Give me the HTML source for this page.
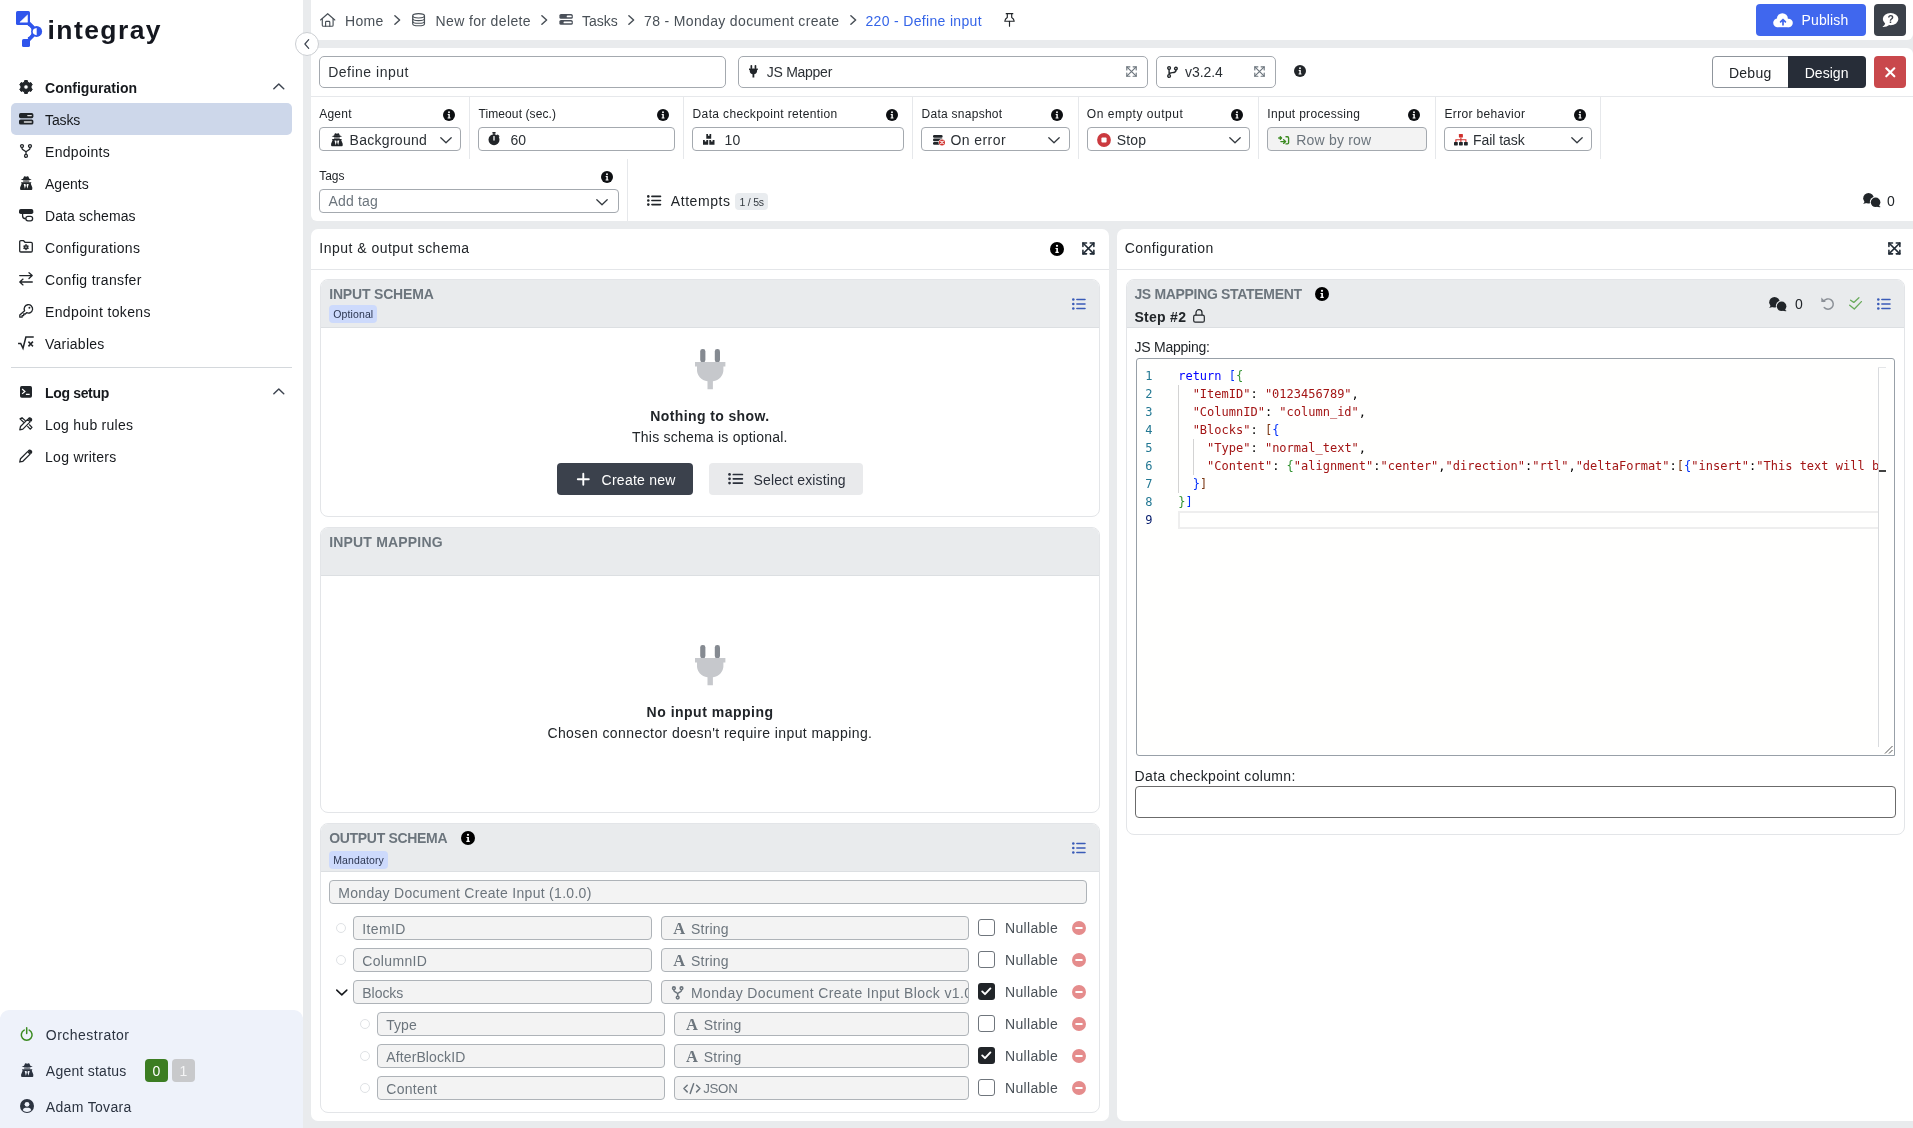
<!DOCTYPE html>
<html lang="en"><head><meta charset="utf-8"><title>Integray - 220 - Define input</title>
<style>
html,body{margin:0;padding:0}
body{width:1913px;height:1128px;overflow:hidden;position:relative;background:#e9ebed;will-change:transform;
 font-family:"Liberation Sans",sans-serif;font-size:14px;color:#212529}
body div,body span.t,body svg{position:absolute;box-sizing:border-box}
.t{white-space:pre;line-height:20px}
svg{overflow:visible;display:block}
.mono{font-family:"DejaVu Sans Mono","Liberation Mono",monospace}
aside,header,section,nav{display:contents}

</style></head>
<body>
<aside aria-label="Sidebar navigation">
<div style="left:0px;top:0px;width:303px;height:1128px;background:#fff;"></div>
<svg style="left:0px;top:0px;" width="60" height="52" viewBox="0 0 60 52"><g fill="#2f55ec"><rect x="16" y="10.9" width="14" height="14.1" rx="1.6"/><rect x="22" y="39" width="8" height="8" rx="1.6"/><circle cx="36.6" cy="31.4" r="5.5"/><path d="M27.2,23.8L30,21.8L35,27L32.2,29.8Z M32.2,33L35,35.8L29.9,41.2L27.2,39.4Z"/></g><path d="M28.2,24.2A7.6,7.6 0 0 1 28.2,38.8" fill="none" stroke="#2f55ec" stroke-width="3.3"/><path d="M19.9,22.2L27.5,14.9V22.2Z" fill="#fff" stroke="#fff" stroke-width="0.5" stroke-linejoin="round"/><path d="M36.7,27.9V35.3Q32.7,34.9 32.7,31.6Q32.7,28.3 36.7,27.9Z" fill="#fff"/></svg>
<span class="t" style="top:13.6px;font-size:26.5px;left:47.6px;font-weight:700;color:#14171f;letter-spacing:1.415px;line-height:32px;">integray</span>
<svg style="left:18.7px;top:80px;" width="14" height="14" viewBox="0 0 14 14"><path d="M5.27,2.20 L5.63,0.54 L8.37,0.54 L8.73,2.20 L10.29,3.10 L11.90,2.58 L13.28,4.96 L12.02,6.10 L12.02,7.90 L13.28,9.04 L11.90,11.42 L10.29,10.90 L8.73,11.80 L8.37,13.46 L5.63,13.46 L5.27,11.80 L3.71,10.90 L2.10,11.42 L0.72,9.04 L1.98,7.90 L1.98,6.10 L0.72,4.96 L2.10,2.58 L3.71,3.10Z M9.30,7.00 a2.3,2.3 0 1,0 -4.6,0 a2.3,2.3 0 1,0 4.6,0Z" fill="#212529" fill-rule="evenodd" stroke="#212529" stroke-width="1" stroke-linejoin="round"/></svg>
<span class="t" style="top:77.6px;font-size:14px;left:45px;font-weight:700;color:#16191d;letter-spacing:0.02px;">Configuration</span>
<svg style="left:272.7px;top:82.7px;" width="11.6" height="6.6" viewBox="0 0 11 6.2"><path d="M0.8,5.4L5.5,0.9L10.2,5.4" fill="none" stroke="#3d4450" stroke-width="1.4" stroke-linecap="round" stroke-linejoin="round"/></svg>
<div style="left:11px;top:103px;width:281px;height:32px;background:#cdd7ea;border-radius:5px;"></div>
<svg style="left:18.6px;top:113.1px;" width="14.4" height="11.6" viewBox="0 0 14.4 11.6"><rect x="0" y="0" width="14.4" height="5.2" rx="1.7" fill="#212529"/><rect x="0" y="6.4" width="14.4" height="5.2" rx="1.7" fill="#212529"/><path d="M8.8,2.6H12.3M5.4,9H12.3" stroke="#fff" stroke-width="1.3" stroke-linecap="round" opacity="0.85"/></svg>
<span class="t" style="top:109.6px;font-size:14px;left:45px;color:#16191d;letter-spacing:-0.124px;">Tasks</span>
<svg style="left:20px;top:143.7px;" width="12" height="14" viewBox="0 0 12 14"><g fill="none" stroke="#212529" stroke-width="1.3"><circle cx="2" cy="2.1" r="1.45"/><circle cx="10" cy="2.1" r="1.45"/><circle cx="6" cy="11.9" r="1.45"/><path d="M2,3.6V4.6C2,6.4 6,6.3 6,8.2V10.4M10,3.6V4.6C10,6.4 6,6.3 6,8.2"/></g></svg>
<span class="t" style="top:141.6px;font-size:14px;left:45px;color:#16191d;letter-spacing:0.315px;">Endpoints</span>
<svg style="left:19.7px;top:175.8px;" width="12.4" height="14" viewBox="0 0 12.4 14"><path d="M3,3L3.9,0.7Q4.1,0 4.8,0.2L6.2,0.7L7.6,0.2Q8.3,0 8.5,0.7L9.4,3Z" fill="#212529"/><path d="M0.7,3.5Q3,2.4 6.2,2.4Q9.4,2.4 11.7,3.5Q9.6,4.6 6.2,4.6Q2.8,4.6 0.7,3.5Z" fill="#212529"/><path d="M3,4.6H9.4L9.1,6.4H3.3Z" fill="#212529" opacity="0.6"/><path d="M1,6.3H11.4L10.8,7.7L12.3,11.4V13Q12.3,13.9 11.4,13.9H1Q0.1,13.9 0.1,13V11.4L1.6,7.7Z" fill="#212529"/><path d="M3.7,8L5.5,8L5.9,9.3L4.9,12.8Z M8.7,8L6.9,8L6.5,9.3L7.5,12.8Z" fill="#fff"/></svg>
<span class="t" style="top:173.6px;font-size:14px;left:45px;color:#16191d;letter-spacing:0.021px;">Agents</span>
<svg style="left:18.6px;top:208.7px;" width="14.3" height="12.6" viewBox="0 0 14.3 12.6"><rect x="0" y="0" width="14.3" height="5" rx="1.8" fill="#212529"/><g fill="none" stroke="#212529" stroke-width="1.3"><path d="M3.6,4.6V7Q3.6,9.7 6.8,9.7"/><rect x="6.9" y="7.3" width="6.7" height="4.6" rx="2.1"/></g></svg>
<span class="t" style="top:205.6px;font-size:14px;left:45px;color:#16191d;letter-spacing:0.101px;">Data schemas</span>
<svg style="left:18.8px;top:240.2px;" width="14" height="12.7" viewBox="0 0 14 12.7"><path d="M0.7,1.9Q0.7,0.7 1.9,0.7H4.6L6,2.3H12.1Q13.3,2.3 13.3,3.5V10.8Q13.3,12 12.1,12H1.9Q0.7,12 0.7,10.8Z" fill="none" stroke="#212529" stroke-width="1.3" stroke-linejoin="round"/><path d="M6.36,5.41 L6.44,4.56 L7.56,4.56 L7.64,5.41 L8.23,5.75 L9.01,5.39 L9.57,6.37 L8.87,6.86 L8.87,7.54 L9.57,8.03 L9.01,9.01 L8.23,8.65 L7.64,8.99 L7.56,9.84 L6.44,9.84 L6.36,8.99 L5.77,8.65 L4.99,9.01 L4.43,8.03 L5.13,7.54 L5.13,6.86 L4.43,6.37 L4.99,5.39 L5.77,5.75Z M7.90,7.20 a0.9,0.9 0 1,0 -1.8,0 a0.9,0.9 0 1,0 1.8,0Z" fill="#212529" fill-rule="evenodd" stroke="#212529" stroke-width="0.5" stroke-linejoin="round"/></svg>
<span class="t" style="top:237.6px;font-size:14px;left:45px;color:#16191d;letter-spacing:0.363px;">Configurations</span>
<svg style="left:18.8px;top:272.2px;" width="14" height="13.6" viewBox="0 0 14 13.6"><g fill="none" stroke="#212529" stroke-width="1.3" stroke-linecap="round" stroke-linejoin="round"><path d="M0.7,3.6H13.1M10,0.7L13.2,3.6L10,6.5"/><path d="M13.3,10H0.9M4,7.1L0.8,10L4,12.9"/></g></svg>
<span class="t" style="top:269.6px;font-size:14px;left:45px;color:#16191d;letter-spacing:0.327px;">Config transfer</span>
<svg style="left:18.8px;top:303.8px;" width="14" height="14" viewBox="0 0 14 14"><g fill="none" stroke="#212529" stroke-width="1.3" stroke-linejoin="round"><path d="M5.6,6.7A4.2,4.2 0 1 1 7.6,8.7L6.3,10H4.7V11.6H3.1V13.2H0.8V10.9Z"/></g><circle cx="10.4" cy="3.8" r="0.95" fill="#212529"/></svg>
<span class="t" style="top:301.6px;font-size:14px;left:45px;color:#16191d;letter-spacing:0.364px;">Endpoint tokens</span>
<svg style="left:18.2px;top:335.7px;" width="15.8" height="13.7" viewBox="0 0 15.8 13.7"><g fill="none" stroke="#212529" stroke-linecap="square"><path d="M0.8,7.5H2.7L5,12.3L7.9,1H15" stroke-width="1.5" stroke-linejoin="miter"/><path d="M11,6.2L14.4,9.8M14.4,6.2L11,9.8" stroke-width="1.6"/></g></svg>
<span class="t" style="top:333.6px;font-size:14px;left:45px;color:#16191d;letter-spacing:0.246px;">Variables</span>
<div style="left:11px;top:367px;width:281px;height:1px;background:#d4d8dc;"></div>
<svg style="left:20px;top:386px;" width="12" height="11.7" viewBox="0 0 12 11.7"><rect x="0" y="0" width="12" height="11.7" rx="1.7" fill="#212529"/><path d="M2.1,3.1L4.9,5.5L2.1,7.9M5.9,8.4H9.7" fill="none" stroke="#fff" stroke-width="1.25"/></svg>
<span class="t" style="top:382.6px;font-size:14px;left:45px;font-weight:700;color:#16191d;letter-spacing:-0.336px;">Log setup</span>
<svg style="left:272.7px;top:387.7px;" width="11.6" height="6.6" viewBox="0 0 11 6.2"><path d="M0.8,5.4L5.5,0.9L10.2,5.4" fill="none" stroke="#3d4450" stroke-width="1.4" stroke-linecap="round" stroke-linejoin="round"/></svg>
<svg style="left:19px;top:417.2px;" width="13.5" height="13.4" viewBox="0 0 13.5 13.4"><g stroke="#212529" stroke-width="1.25" stroke-linejoin="round"><path d="M8.6,2.4L11.1,4.9L3.9,12.1L0.8,12.8L1.5,9.5Z" fill="none"/><path d="M9.4,1.6Q10.6,0.2 12,1.5Q13.3,2.8 11.9,4.1Z" fill="#212529"/><path d="M4.9,5.5L1,1.9L3,0.7L6.6,3.9M8.4,9.2L11.2,12.2L13,10.4L10.2,7.5" fill="none"/></g></svg>
<span class="t" style="top:414.6px;font-size:14px;left:45px;color:#16191d;letter-spacing:0.263px;">Log hub rules</span>
<svg style="left:19px;top:449.1px;" width="13.5" height="13.7" viewBox="0 0 13.5 13.7"><g stroke="#212529" stroke-width="1.3" stroke-linejoin="round"><path d="M8.6,2.6L11.1,5.1L3.9,12.3L0.8,13L1.5,9.7Z" fill="none"/><path d="M9.4,1.8Q10.6,0.4 12,1.7Q13.3,3 11.9,4.3Z" fill="#212529"/></g></svg>
<span class="t" style="top:446.6px;font-size:14px;left:45px;color:#16191d;letter-spacing:0.283px;">Log writers</span>
<div style="left:0px;top:1010px;width:303px;height:118px;background:#eef2fa;border-radius:9px 9px 0 0;"></div>
<svg style="left:20.1px;top:1026.8px;" width="13.4" height="13.6" viewBox="0 0 13.4 13.6"><g fill="none" stroke="#3a8a1f" stroke-width="1.5" stroke-linecap="round"><path d="M4.2,3.1A5.4,5.4 0 1 0 9.2,3.1"/><path d="M6.7,0.8V6.4"/></g></svg>
<span class="t" style="top:1024.9px;font-size:14px;left:45.8px;color:#2b3340;letter-spacing:0.49px;">Orchestrator</span>
<svg style="left:20.6px;top:1062.7px;" width="12.4" height="14" viewBox="0 0 12.4 14"><path d="M3,3L3.9,0.7Q4.1,0 4.8,0.2L6.2,0.7L7.6,0.2Q8.3,0 8.5,0.7L9.4,3Z" fill="#2b3340"/><path d="M0.7,3.5Q3,2.4 6.2,2.4Q9.4,2.4 11.7,3.5Q9.6,4.6 6.2,4.6Q2.8,4.6 0.7,3.5Z" fill="#2b3340"/><path d="M3,4.6H9.4L9.1,6.4H3.3Z" fill="#2b3340" opacity="0.6"/><path d="M1,6.3H11.4L10.8,7.7L12.3,11.4V13Q12.3,13.9 11.4,13.9H1Q0.1,13.9 0.1,13V11.4L1.6,7.7Z" fill="#2b3340"/><path d="M3.7,8L5.5,8L5.9,9.3L4.9,12.8Z M8.7,8L6.9,8L6.5,9.3L7.5,12.8Z" fill="#eef2fa"/></svg>
<span class="t" style="top:1060.9px;font-size:14px;left:45.8px;color:#2b3340;letter-spacing:0.243px;">Agent status</span>
<div style="left:145px;top:1059px;width:23px;height:23px;background:#3c7d22;border-radius:4px;"></div>
<span class="t" style="top:1060.8px;font-size:14px;left:156.5px;transform:translateX(-50%);color:#fff;">0</span>
<div style="left:172px;top:1059px;width:23px;height:23px;background:#c8c9cb;border-radius:4px;"></div>
<span class="t" style="top:1060.8px;font-size:14px;left:183.5px;transform:translateX(-50%);color:#f4f4f5;">1</span>
<svg style="left:19.8px;top:1098.7px;" width="14" height="14" viewBox="0 0 14 14"><circle cx="7" cy="7" r="7" fill="#2b3340"/><circle cx="7" cy="5.3" r="2.4" fill="#eef2fa"/><path d="M2.7,11.2Q3.3,8.7 5.2,8.7H8.8Q10.7,8.7 11.3,11.2Q9.6,13 7,13Q4.4,13 2.7,11.2Z" fill="#eef2fa"/></svg>
<span class="t" style="top:1096.8px;font-size:14px;left:45.8px;color:#2b3340;letter-spacing:0.327px;">Adam Tovara</span>
</aside>
<header aria-label="Breadcrumb and actions">
<div style="left:311px;top:0px;width:1602px;height:40px;background:#fff;border-radius:0 0 6px 0;"></div>
<svg style="left:320px;top:12.8px;" width="15.4" height="14" viewBox="0 0 15.4 14"><g fill="none" stroke="#495057" stroke-width="1.15" stroke-linejoin="round" stroke-linecap="round"><path d="M0.6,7L7.7,0.7L14.8,7"/><path d="M2.3,5.8V12.2Q2.3,13.3 3.4,13.3H12Q13.1,13.3 13.1,12.2V5.8"/><path d="M5.6,13.2V9.2Q5.6,8.4 6.4,8.4H9Q9.8,8.4 9.8,9.2V13.2"/></g></svg>
<span class="t" style="top:10.8px;font-size:14px;left:345px;color:#495057;letter-spacing:0.28px;">Home</span>
<svg style="left:394px;top:14.8px;" width="6.5" height="10" viewBox="0 0 6.5 10"><path d="M0.9,0.8L5.6,5L0.9,9.2" fill="none" stroke="#495057" stroke-width="1.5" stroke-linecap="round" stroke-linejoin="round"/></svg>
<svg style="left:411.8px;top:12.9px;" width="13.2" height="13.6" viewBox="0 0 13.2 13.6"><g fill="none" stroke="#495057" stroke-width="1.15"><ellipse cx="6.6" cy="2.8" rx="5.9" ry="2.2"/><path d="M0.7,2.8V10.7C0.7,11.9 3.3,12.8 6.6,12.8C9.9,12.8 12.5,11.9 12.5,10.7V2.8"/><path d="M0.7,5.5C0.7,6.7 3.3,7.6 6.6,7.6C9.9,7.6 12.5,6.7 12.5,5.5M0.7,8.2C0.7,9.4 3.3,10.3 6.6,10.3C9.9,10.3 12.5,9.4 12.5,8.2"/></g></svg>
<span class="t" style="top:10.8px;font-size:14px;left:435.6px;color:#495057;letter-spacing:0.363px;">New for delete</span>
<svg style="left:540.6px;top:14.8px;" width="6.5" height="10" viewBox="0 0 6.5 10"><path d="M0.9,0.8L5.6,5L0.9,9.2" fill="none" stroke="#495057" stroke-width="1.5" stroke-linecap="round" stroke-linejoin="round"/></svg>
<svg style="left:558.5px;top:14.2px;" width="14.2" height="10.8" viewBox="0 0 14.4 11.6"><rect x="0" y="0" width="14.4" height="5.2" rx="1.7" fill="#4a505a"/><rect x="0" y="6.4" width="14.4" height="5.2" rx="1.7" fill="#4a505a"/><path d="M8.8,2.6H12.3M5.4,9H12.3" stroke="#fff" stroke-width="2" stroke-linecap="round" opacity="1"/></svg>
<span class="t" style="top:10.8px;font-size:14px;left:582px;color:#495057;letter-spacing:0.001px;">Tasks</span>
<svg style="left:628.2px;top:14.8px;" width="6.5" height="10" viewBox="0 0 6.5 10"><path d="M0.9,0.8L5.6,5L0.9,9.2" fill="none" stroke="#495057" stroke-width="1.5" stroke-linecap="round" stroke-linejoin="round"/></svg>
<span class="t" style="top:10.8px;font-size:14px;left:644px;color:#495057;letter-spacing:0.346px;">78 - Monday document create</span>
<svg style="left:849.6px;top:14.8px;" width="6.5" height="10" viewBox="0 0 6.5 10"><path d="M0.9,0.8L5.6,5L0.9,9.2" fill="none" stroke="#495057" stroke-width="1.5" stroke-linecap="round" stroke-linejoin="round"/></svg>
<span class="t" style="top:10.8px;font-size:14px;left:865.4px;color:#3565e8;letter-spacing:0.333px;">220 - Define input</span>
<svg style="left:1004.3px;top:13px;" width="11" height="13.8" viewBox="0 0 11 13.8"><g fill="none" stroke="#212529" stroke-width="1.15" stroke-linejoin="round" stroke-linecap="round"><path d="M2.2,0.7H8.8"/><path d="M3.3,0.7V4.6Q1,6 0.8,8.3H10.2Q10,6 7.7,4.6V0.7"/><path d="M5.5,8.3V13.2"/></g></svg>
<div style="left:1756px;top:4px;width:110px;height:32px;background:#4067ee;border-radius:4px;"></div>
<svg style="left:1772.9px;top:13px;" width="20" height="14.3" viewBox="0 0 20 14.3"><g fill="#fff"><circle cx="4.6" cy="9.8" r="4.4"/><circle cx="9.4" cy="5.7" r="5.5"/><circle cx="15.6" cy="10" r="4.2"/><rect x="4.6" y="8.6" width="11" height="5.6"/></g><path d="M10,11.8V6.8M7.6,8.9L10,6.5L12.4,8.9" fill="none" stroke="#4067ee" stroke-width="1.7" stroke-linecap="round" stroke-linejoin="round"/></svg>
<span class="t" style="top:9.8px;font-size:14px;left:1801.5px;color:#fff;letter-spacing:0.146px;">Publish</span>
<div style="left:1874px;top:4px;width:32px;height:32px;background:#3b414a;border-radius:4px;"></div>
<svg style="left:1881.7px;top:13px;" width="16.4" height="14.3" viewBox="0 0 16.4 14.3"><ellipse cx="8.6" cy="6.1" rx="7.8" ry="6.1" fill="#fff"/><path d="M3.6,9.6Q3,12.6 0.4,13.9Q4.6,14.2 7.2,11.9Z" fill="#fff"/><text x="8.7" y="9.9" font-size="10.5" font-weight="700" text-anchor="middle" fill="#3b414a" font-family="Liberation Sans,sans-serif">?</text></svg>
</header>
<section aria-label="Step settings">
<div style="left:311px;top:48px;width:1602px;height:173px;background:#fff;border-radius:0 6px 0 6px;"></div>
<div style="left:319px;top:56px;width:407px;height:32px;background:#fff;border:1px solid #a4a9af;border-radius:5px;"></div>
<span class="t" style="top:61.7px;font-size:14px;left:328.2px;color:#2b3035;letter-spacing:0.498px;">Define input</span>
<div style="left:738px;top:56px;width:410px;height:32px;background:#fff;border:1px solid #a4a9af;border-radius:5px;"></div>
<svg style="left:749.2px;top:65.2px;" width="8.8" height="12.6" viewBox="0 0 8.8 12.6"><g fill="#212529"><rect x="1.5" y="0" width="1.7" height="4" rx="0.8"/><rect x="5.6" y="0" width="1.7" height="4" rx="0.8"/><path d="M0,3.4H8.8V4.9H8.1V5.6A3.7,3.7 0 0 1 5.3,9.3V12.6H3.5V9.3A3.7,3.7 0 0 1 0.7,5.6V4.9H0Z"/></g></svg>
<span class="t" style="top:61.7px;font-size:14px;left:766.8px;color:#2b3035;letter-spacing:-0.275px;">JS Mapper</span>
<svg style="left:1126px;top:66px;" width="11" height="11" viewBox="0 0 11 11"><g fill="none" stroke="#6c757d" stroke-width="1.15" stroke-linecap="round" stroke-linejoin="round"><path d="M0.8,0.8L10.2,10.2M10.2,0.8L0.8,10.2"/><path d="M0.8,3.9V0.8H3.9M7.1,0.8H10.2V3.9M10.2,7.1V10.2H7.1M3.9,10.2H0.8V7.1"/></g></svg>
<div style="left:1156px;top:56px;width:120px;height:32px;background:#fff;border:1px solid #a4a9af;border-radius:5px;"></div>
<svg style="left:1166.5px;top:65.5px;" width="11" height="12" viewBox="0 0 11 12"><g fill="none" stroke="#212529" stroke-width="1.4"><circle cx="2.1" cy="2" r="1.35"/><circle cx="2.1" cy="10" r="1.35"/><circle cx="8.9" cy="2.6" r="1.35"/><path d="M2.1,3.4V8.6M8.9,4V4.4Q8.9,6.4 5.4,6.6Q2.1,6.8 2.1,8.6"/></g></svg>
<span class="t" style="top:61.8px;font-size:14px;left:1185px;color:#2b3035;letter-spacing:-0.068px;">v3.2.4</span>
<svg style="left:1254px;top:66px;" width="11" height="11" viewBox="0 0 11 11"><g fill="none" stroke="#6c757d" stroke-width="1.15" stroke-linecap="round" stroke-linejoin="round"><path d="M0.8,0.8L10.2,10.2M10.2,0.8L0.8,10.2"/><path d="M0.8,3.9V0.8H3.9M7.1,0.8H10.2V3.9M10.2,7.1V10.2H7.1M3.9,10.2H0.8V7.1"/></g></svg>
<svg style="left:1294.1px;top:65.4px;" width="12" height="12" viewBox="0 0 12 12"><circle cx="6" cy="6" r="6" fill="#212529"/><circle cx="6" cy="3.3" r="0.95" fill="#fff"/><path d="M4.7,5.1H6.8V8.4H7.5V9.4H4.6V8.4H5.4V6.1H4.7Z" fill="#fff"/></svg>
<div style="left:1712px;top:56px;width:77px;height:32px;background:#fff;border:1px solid #8f959c;border-radius:4px 0 0 4px;"></div>
<span class="t" style="top:63.0px;font-size:14px;left:1729px;letter-spacing:0.234px;">Debug</span>
<div style="left:1788px;top:56px;width:78px;height:32px;background:#272d38;border-radius:0 4px 4px 0;"></div>
<span class="t" style="top:63.0px;font-size:14px;left:1804.7px;color:#fff;letter-spacing:0.041px;">Design</span>
<div style="left:1874px;top:56px;width:32px;height:32px;background:#c9484c;border-radius:4px;"></div>
<svg style="left:1884.6px;top:67px;" width="10.6" height="10.6" viewBox="0 0 10 10"><path d="M1.2,1.2L8.8,8.8M8.8,1.2L1.2,8.8" stroke="#fff" stroke-width="2" stroke-linecap="round"/></svg>
<div style="left:311px;top:96px;width:1602px;height:1px;background:#e6e8eb;"></div>
<div style="left:469px;top:97px;width:1px;height:62px;background:#e6e8eb;"></div>
<div style="left:683px;top:97px;width:1px;height:62px;background:#e6e8eb;"></div>
<div style="left:912px;top:97px;width:1px;height:62px;background:#e6e8eb;"></div>
<div style="left:1078px;top:97px;width:1px;height:62px;background:#e6e8eb;"></div>
<div style="left:1258px;top:97px;width:1px;height:62px;background:#e6e8eb;"></div>
<div style="left:1435px;top:97px;width:1px;height:62px;background:#e6e8eb;"></div>
<div style="left:1600px;top:97px;width:1px;height:62px;background:#e6e8eb;"></div>
<div style="left:627px;top:159px;width:1px;height:62px;background:#e6e8eb;"></div>
<span class="t" style="top:104.2px;font-size:12px;left:319.2px;letter-spacing:0.235px;">Agent</span>
<svg style="left:442.5px;top:109.1px;" width="12" height="12" viewBox="0 0 12 12"><circle cx="6" cy="6" r="6" fill="#0d0f12"/><circle cx="6" cy="3.3" r="0.95" fill="#fff"/><path d="M4.7,5.1H6.8V8.4H7.5V9.4H4.6V8.4H5.4V6.1H4.7Z" fill="#fff"/></svg>
<div style="left:319px;top:127px;width:142px;height:24px;background:#fff;border:1px solid #a4a9af;border-radius:4px;"></div>
<svg style="left:331px;top:133.1px;" width="11.8" height="13.3" viewBox="0 0 12.4 14"><path d="M3,3L3.9,0.7Q4.1,0 4.8,0.2L6.2,0.7L7.6,0.2Q8.3,0 8.5,0.7L9.4,3Z" fill="#212529"/><path d="M0.7,3.5Q3,2.4 6.2,2.4Q9.4,2.4 11.7,3.5Q9.6,4.6 6.2,4.6Q2.8,4.6 0.7,3.5Z" fill="#212529"/><path d="M3,4.6H9.4L9.1,6.4H3.3Z" fill="#212529" opacity="0.6"/><path d="M1,6.3H11.4L10.8,7.7L12.3,11.4V13Q12.3,13.9 11.4,13.9H1Q0.1,13.9 0.1,13V11.4L1.6,7.7Z" fill="#212529"/><path d="M3.7,8L5.5,8L5.9,9.3L4.9,12.8Z M8.7,8L6.9,8L6.5,9.3L7.5,12.8Z" fill="#fff"/></svg>
<span class="t" style="top:129.7px;font-size:14px;left:349.6px;color:#2b3035;letter-spacing:0.276px;">Background</span>
<svg style="left:440.1px;top:136.7px;" width="12" height="6.6" viewBox="0 0 12 6.6"><path d="M0.8,0.8L6,5.7L11.2,0.8" fill="none" stroke="#343a40" stroke-width="1.3" stroke-linecap="round" stroke-linejoin="round"/></svg>
<span class="t" style="top:104.2px;font-size:12px;left:478.5px;letter-spacing:0.096px;">Timeout (sec.)</span>
<svg style="left:656.6px;top:109.1px;" width="12" height="12" viewBox="0 0 12 12"><circle cx="6" cy="6" r="6" fill="#0d0f12"/><circle cx="6" cy="3.3" r="0.95" fill="#fff"/><path d="M4.7,5.1H6.8V8.4H7.5V9.4H4.6V8.4H5.4V6.1H4.7Z" fill="#fff"/></svg>
<div style="left:478.3px;top:127px;width:196.7px;height:24px;background:#fff;border:1px solid #a4a9af;border-radius:4px;"></div>
<svg style="left:487.8px;top:131.8px;" width="12" height="13.2" viewBox="0 0 12 13.2"><circle cx="6" cy="7.7" r="5.5" fill="#212529"/><rect x="4.3" y="0" width="3.4" height="1.5" rx="0.6" fill="#212529"/><rect x="5.3" y="1" width="1.4" height="2" fill="#212529"/><path d="M9.6,3.2L10.7,4.3" stroke="#212529" stroke-width="1.4" stroke-linecap="round"/><path d="M6,4.6V8" stroke="#fff" stroke-width="1.3" stroke-linecap="round"/></svg>
<span class="t" style="top:129.7px;font-size:14px;left:510.4px;color:#2b3035;">60</span>
<span class="t" style="top:104.2px;font-size:12px;left:692.6px;letter-spacing:0.359px;">Data checkpoint retention</span>
<svg style="left:885.8px;top:109.1px;" width="12" height="12" viewBox="0 0 12 12"><circle cx="6" cy="6" r="6" fill="#0d0f12"/><circle cx="6" cy="3.3" r="0.95" fill="#fff"/><path d="M4.7,5.1H6.8V8.4H7.5V9.4H4.6V8.4H5.4V6.1H4.7Z" fill="#fff"/></svg>
<div style="left:692.4px;top:127px;width:211.2px;height:24px;background:#fff;border:1px solid #a4a9af;border-radius:4px;"></div>
<svg style="left:703.2px;top:134px;" width="11.5" height="10.8" viewBox="0 0 11.5 10.8"><g fill="#212529"><path d="M3.3,0H5V1.7H6.5V0H8.2V4.7H3.3Z"/><path d="M0,5.9H1.8V7.6H3.3V5.9H5.2V10.8H0Z"/><path d="M6.3,5.9H8.1V7.6H9.6V5.9H11.5V10.8H6.3Z"/></g></svg>
<span class="t" style="top:129.7px;font-size:14px;left:724.6px;color:#2b3035;">10</span>
<span class="t" style="top:104.2px;font-size:12px;left:921.6px;letter-spacing:0.259px;">Data snapshot</span>
<svg style="left:1050.7px;top:109.1px;" width="12" height="12" viewBox="0 0 12 12"><circle cx="6" cy="6" r="6" fill="#0d0f12"/><circle cx="6" cy="3.3" r="0.95" fill="#fff"/><path d="M4.7,5.1H6.8V8.4H7.5V9.4H4.6V8.4H5.4V6.1H4.7Z" fill="#fff"/></svg>
<div style="left:921.2px;top:127px;width:148.4px;height:24px;background:#fff;border:1px solid #a4a9af;border-radius:4px;"></div>
<svg style="left:932.5px;top:134.6px;" width="12.2" height="10.6" viewBox="0 0 12.2 10.6"><g fill="#212529"><rect x="0" y="0" width="9.6" height="2.7" rx="1.2"/><rect x="0" y="3.5" width="9.6" height="2.7" rx="1.2"/><rect x="0" y="7" width="9.6" height="2.7" rx="1.2"/></g><circle cx="9" cy="7.4" r="3.5" fill="#fff"/><circle cx="9" cy="7.4" r="3" fill="#d0312d"/><path d="M7.7,6.1L10.3,8.7M10.3,6.1L7.7,8.7" stroke="#fff" stroke-width="1.1" stroke-linecap="round"/></svg>
<span class="t" style="top:129.7px;font-size:14px;left:950.4px;color:#2b3035;letter-spacing:0.439px;">On error</span>
<svg style="left:1048.4px;top:136.7px;" width="12" height="6.6" viewBox="0 0 12 6.6"><path d="M0.8,0.8L6,5.7L11.2,0.8" fill="none" stroke="#343a40" stroke-width="1.3" stroke-linecap="round" stroke-linejoin="round"/></svg>
<span class="t" style="top:104.2px;font-size:12px;left:1086.8px;letter-spacing:0.52px;">On empty output</span>
<svg style="left:1231.3px;top:109.1px;" width="12" height="12" viewBox="0 0 12 12"><circle cx="6" cy="6" r="6" fill="#0d0f12"/><circle cx="6" cy="3.3" r="0.95" fill="#fff"/><path d="M4.7,5.1H6.8V8.4H7.5V9.4H4.6V8.4H5.4V6.1H4.7Z" fill="#fff"/></svg>
<div style="left:1087px;top:127px;width:162.7px;height:24px;background:#fff;border:1px solid #a4a9af;border-radius:4px;"></div>
<svg style="left:1097.2px;top:132.7px;" width="14" height="14" viewBox="0 0 14 14"><circle cx="7" cy="7" r="6.9" fill="#cb3a3f"/><rect x="4.4" y="4.4" width="5.2" height="5.2" rx="1" fill="#fff"/></svg>
<span class="t" style="top:129.7px;font-size:14px;left:1116.8px;color:#2b3035;letter-spacing:0.163px;">Stop</span>
<svg style="left:1228.8px;top:136.7px;" width="12" height="6.6" viewBox="0 0 12 6.6"><path d="M0.8,0.8L6,5.7L11.2,0.8" fill="none" stroke="#343a40" stroke-width="1.3" stroke-linecap="round" stroke-linejoin="round"/></svg>
<span class="t" style="top:104.2px;font-size:12px;left:1267.3px;letter-spacing:0.302px;">Input processing</span>
<svg style="left:1408.4px;top:109.1px;" width="12" height="12" viewBox="0 0 12 12"><circle cx="6" cy="6" r="6" fill="#0d0f12"/><circle cx="6" cy="3.3" r="0.95" fill="#fff"/><path d="M4.7,5.1H6.8V8.4H7.5V9.4H4.6V8.4H5.4V6.1H4.7Z" fill="#fff"/></svg>
<div style="left:1267.2px;top:127px;width:159.6px;height:24px;background:#f3f3f3;border:1px solid #a4a9af;border-radius:4px;"></div>
<svg style="left:1278.3px;top:135.6px;" width="11.3" height="8.6" viewBox="0 0 11.3 8.6"><g fill="none" stroke="#3a8a1f" stroke-width="1.35" stroke-linecap="round" stroke-linejoin="round"><path d="M0.7,2H3.4M2.3,0.8L3.6,2L2.3,3.2"/><path d="M2.9,5.6H7.4M5.6,3.8L7.6,5.6L5.6,7.4"/><path d="M8,0.8H9.5Q10.6,0.8 10.6,1.9V6.8Q10.6,7.9 9.5,7.9H8"/></g></svg>
<span class="t" style="top:129.7px;font-size:14px;left:1296.2px;color:#6c757d;letter-spacing:0.207px;">Row by row</span>
<span class="t" style="top:104.2px;font-size:12px;left:1444.5px;letter-spacing:0.344px;">Error behavior</span>
<svg style="left:1573.5px;top:109.1px;" width="12" height="12" viewBox="0 0 12 12"><circle cx="6" cy="6" r="6" fill="#0d0f12"/><circle cx="6" cy="3.3" r="0.95" fill="#fff"/><path d="M4.7,5.1H6.8V8.4H7.5V9.4H4.6V8.4H5.4V6.1H4.7Z" fill="#fff"/></svg>
<div style="left:1444.4px;top:127px;width:147.5px;height:24px;background:#fff;border:1px solid #a4a9af;border-radius:4px;"></div>
<svg style="left:1454.4px;top:134px;" width="13.8" height="11.4" viewBox="0 0 13.8 11.4"><rect x="4.9" y="0" width="4" height="3.6" rx="0.6" fill="#d0312d"/><path d="M6.9,3.6V5.7M1.9,8.2V5.8H11.9V8.2M6.9,5.8V8.2" fill="none" stroke="#d0312d" stroke-width="1.1"/><g fill="#212529"><rect x="0" y="8" width="3.8" height="3.4" rx="0.6"/><rect x="5" y="8" width="3.8" height="3.4" rx="0.6"/><rect x="10" y="8" width="3.8" height="3.4" rx="0.6"/></g></svg>
<span class="t" style="top:129.7px;font-size:14px;left:1473px;color:#2b3035;letter-spacing:-0.041px;">Fail task</span>
<svg style="left:1571px;top:136.7px;" width="12" height="6.6" viewBox="0 0 12 6.6"><path d="M0.8,0.8L6,5.7L11.2,0.8" fill="none" stroke="#343a40" stroke-width="1.3" stroke-linecap="round" stroke-linejoin="round"/></svg>
<span class="t" style="top:166.2px;font-size:12px;left:319.2px;letter-spacing:-0.053px;">Tags</span>
<svg style="left:600.6px;top:171.4px;" width="12" height="12" viewBox="0 0 12 12"><circle cx="6" cy="6" r="6" fill="#0d0f12"/><circle cx="6" cy="3.3" r="0.95" fill="#fff"/><path d="M4.7,5.1H6.8V8.4H7.5V9.4H4.6V8.4H5.4V6.1H4.7Z" fill="#fff"/></svg>
<div style="left:319px;top:189px;width:300px;height:24px;background:#fff;border:1px solid #a4a9af;border-radius:4px;"></div>
<span class="t" style="top:191.4px;font-size:14px;left:328.4px;color:#6c757d;letter-spacing:0.206px;">Add tag</span>
<svg style="left:595.5px;top:199px;" width="12" height="6.6" viewBox="0 0 12 6.6"><path d="M0.8,0.8L6,5.7L11.2,0.8" fill="none" stroke="#343a40" stroke-width="1.3" stroke-linecap="round" stroke-linejoin="round"/></svg>
<svg style="left:646.8px;top:195.4px;" width="14.3" height="11" viewBox="0 0 14.3 11"><g fill="#212529"><circle cx="1.3" cy="1.4" r="1.3"/><circle cx="1.3" cy="5.5" r="1.3"/><circle cx="1.3" cy="9.6" r="1.3"/></g><path d="M4.9,1.4H13.5M4.9,5.5H13.5M4.9,9.6H13.5" stroke="#212529" stroke-width="1.6" stroke-linecap="round"/></svg>
<span class="t" style="top:191.0px;font-size:14px;left:670.8px;letter-spacing:0.564px;">Attempts</span>
<div style="left:735.4px;top:192.6px;width:32.8px;height:17.6px;background:#e9ecef;border-radius:4px;"></div>
<span class="t" style="top:192.0px;font-size:10.5px;left:739.5px;color:#343a40;letter-spacing:-0.217px;">1 / 5s</span>
<svg style="left:1863.4px;top:192.8px;" width="17.8" height="14.4" viewBox="0 0 17.8 14.4"><circle cx="5.5" cy="5.3" r="5.3" fill="#212529"/><path d="M1.6,8.2Q1.3,9.9 0.1,10.7Q2.6,10.9 4.4,9.6Z" fill="#212529"/><circle cx="12.4" cy="9.1" r="5.6" fill="#fff"/><circle cx="12.6" cy="9.3" r="4.8" fill="#212529"/><path d="M15.9,12Q16.4,13.5 17.7,14.1Q15.2,14.4 13.6,13.3Z" fill="#212529"/></svg>
<span class="t" style="top:190.6px;font-size:14px;left:1886.9px;">0</span>
</section>
<section aria-label="Input and output schema">
<div style="left:311px;top:229px;width:798px;height:892px;background:#fff;border-radius:7px;"></div>
<span class="t" style="top:238.3px;font-size:14px;left:319.3px;letter-spacing:0.485px;">Input &amp; output schema</span>
<svg style="left:1049.5px;top:241.7px;" width="14" height="14" viewBox="0 0 12 12"><circle cx="6" cy="6" r="6" fill="#000"/><circle cx="6" cy="3.3" r="0.95" fill="#fff"/><path d="M4.7,5.1H6.8V8.4H7.5V9.4H4.6V8.4H5.4V6.1H4.7Z" fill="#fff"/></svg>
<svg style="left:1082.2px;top:242.4px;" width="12.8" height="12.8" viewBox="0 0 11 11"><g fill="none" stroke="#212b36" stroke-width="1.35" stroke-linecap="round" stroke-linejoin="round"><path d="M0.8,0.8L10.2,10.2M10.2,0.8L0.8,10.2"/><path d="M0.8,3.9V0.8H3.9M7.1,0.8H10.2V3.9M10.2,7.1V10.2H7.1M3.9,10.2H0.8V7.1"/></g></svg>
<div style="left:311px;top:269px;width:798px;height:1px;background:#e4e6e9;"></div>
<div style="left:320px;top:279px;width:780px;height:238px;border:1px solid #e3e5e8;border-radius:8px;background:#fff;overflow:hidden"><div style="left:0;top:0;width:100%;height:48px;background:#e9ebed;border-bottom:1px solid #dcdfe2"></div></div>
<span class="t" style="top:283.9px;font-size:14px;left:329.2px;font-weight:700;color:#6c757d;letter-spacing:-0.178px;">INPUT SCHEMA</span>
<div style="left:329px;top:305px;width:48px;height:18px;background:#cddafc;border-radius:4px;"></div>
<span class="t" style="top:304.0px;font-size:10.5px;left:333.2px;color:#2b3550;letter-spacing:0.127px;">Optional</span>
<svg style="left:1071.9px;top:297.8px;" width="13.7" height="12" viewBox="0 0 13.7 12"><g fill="#3a5bb8"><circle cx="1.3" cy="1.5" r="1.3"/><circle cx="1.3" cy="6" r="1.3"/><circle cx="1.3" cy="10.5" r="1.3"/></g><path d="M4.9,1.5H13M4.9,6H13M4.9,10.5H13" stroke="#3a5bb8" stroke-width="1.6" stroke-linecap="round"/></svg>
<svg style="left:694.7px;top:348.8px;" width="30.4" height="40.2" viewBox="0 0 30.4 40.2"><g fill="#858a91"><rect x="5.2" y="0" width="5.2" height="13.5" rx="2.4"/><rect x="19.8" y="0" width="5.2" height="13.5" rx="2.4"/></g><path d="M0,12.9H30.4V17.6H28.4V20A11.5,11.5 0 0 1 17.9,32.3V40.2H12.5V32.3A11.5,11.5 0 0 1 2,20V17.6H0Z" fill="#c6c8cc"/></svg>
<span class="t" style="top:406.4px;font-size:14px;left:650.3px;font-weight:700;letter-spacing:0.386px;">Nothing to show.</span>
<span class="t" style="top:427.2px;font-size:14px;left:632px;letter-spacing:0.227px;">This schema is optional.</span>
<div style="left:557px;top:463px;width:136px;height:32px;background:#3b414c;border-radius:4px;"></div>
<svg style="left:577.2px;top:472.7px;" width="12.6" height="12.6" viewBox="0 0 12.6 12.6"><path d="M6.3,0.8V11.8M0.8,6.3H11.8" stroke="#fff" stroke-width="1.9" stroke-linecap="round"/></svg>
<span class="t" style="top:469.5px;font-size:14px;left:601.6px;color:#fff;letter-spacing:0.245px;">Create new</span>
<div style="left:709px;top:463px;width:154px;height:32px;background:#e9eaec;border-radius:4px;"></div>
<svg style="left:728px;top:473.4px;" width="15.4" height="11.6" viewBox="0 0 14.3 11"><g fill="#2b303b"><circle cx="1.3" cy="1.4" r="1.3"/><circle cx="1.3" cy="5.5" r="1.3"/><circle cx="1.3" cy="9.6" r="1.3"/></g><path d="M4.9,1.4H13.5M4.9,5.5H13.5M4.9,9.6H13.5" stroke="#2b303b" stroke-width="1.6" stroke-linecap="round"/></svg>
<span class="t" style="top:469.5px;font-size:14px;left:753.6px;color:#2b303b;letter-spacing:0.123px;">Select existing</span>
<div style="left:320px;top:527px;width:780px;height:286px;border:1px solid #e3e5e8;border-radius:8px;background:#fff;overflow:hidden"><div style="left:0;top:0;width:100%;height:48px;background:#e9ebed;border-bottom:1px solid #dcdfe2"></div></div>
<span class="t" style="top:531.9px;font-size:14px;left:329.2px;font-weight:700;color:#6c757d;letter-spacing:0.18px;">INPUT MAPPING</span>
<svg style="left:694.7px;top:644.8px;" width="30.4" height="40.2" viewBox="0 0 30.4 40.2"><g fill="#858a91"><rect x="5.2" y="0" width="5.2" height="13.5" rx="2.4"/><rect x="19.8" y="0" width="5.2" height="13.5" rx="2.4"/></g><path d="M0,12.9H30.4V17.6H28.4V20A11.5,11.5 0 0 1 17.9,32.3V40.2H12.5V32.3A11.5,11.5 0 0 1 2,20V17.6H0Z" fill="#c6c8cc"/></svg>
<span class="t" style="top:702.4px;font-size:14px;left:646.6px;font-weight:700;letter-spacing:0.494px;">No input mapping</span>
<span class="t" style="top:723.2px;font-size:14px;left:547.4px;letter-spacing:0.417px;">Chosen connector doesn&#x27;t require input mapping.</span>
<div style="left:320px;top:823px;width:780px;height:290px;border:1px solid #e3e5e8;border-radius:8px;background:#fff;overflow:hidden"><div style="left:0;top:0;width:100%;height:48px;background:#e9ebed;border-bottom:1px solid #dcdfe2"></div></div>
<span class="t" style="top:827.9px;font-size:14px;left:329.2px;font-weight:700;color:#6c757d;letter-spacing:-0.31px;">OUTPUT SCHEMA</span>
<svg style="left:460.6px;top:830.8px;" width="14" height="14" viewBox="0 0 12 12"><circle cx="6" cy="6" r="6" fill="#000"/><circle cx="6" cy="3.3" r="0.95" fill="#fff"/><path d="M4.7,5.1H6.8V8.4H7.5V9.4H4.6V8.4H5.4V6.1H4.7Z" fill="#fff"/></svg>
<div style="left:329px;top:851px;width:59px;height:18px;background:#cddafc;border-radius:4px;"></div>
<span class="t" style="top:850.0px;font-size:10.5px;left:333.2px;color:#2b3550;letter-spacing:0.124px;">Mandatory</span>
<svg style="left:1071.9px;top:841.8px;" width="13.7" height="12" viewBox="0 0 13.7 12"><g fill="#3a5bb8"><circle cx="1.3" cy="1.5" r="1.3"/><circle cx="1.3" cy="6" r="1.3"/><circle cx="1.3" cy="10.5" r="1.3"/></g><path d="M4.9,1.5H13M4.9,6H13M4.9,10.5H13" stroke="#3a5bb8" stroke-width="1.6" stroke-linecap="round"/></svg>
<div style="left:329px;top:880px;width:758px;height:24px;background:#f3f3f3;border:1px solid #aeb3b8;border-radius:4px;"></div>
<span class="t" style="top:882.8px;font-size:14px;left:338.3px;color:#6c757d;letter-spacing:0.292px;">Monday Document Create Input (1.0.0)</span>
<div style="left:335.6px;top:922.8px;width:10.4px;height:10.4px;border-radius:50%;border:1px solid #dfe2e5;background:#fff"></div>
<div style="left:353px;top:916px;width:298.7px;height:24px;background:#f3f3f3;border:1px solid #aeb3b8;border-radius:4px;"></div>
<span class="t" style="top:918.8px;font-size:14px;left:362.3px;color:#6c757d;letter-spacing:0.353px;">ItemID</span>
<div style="left:661.2px;top:916px;width:307.8px;height:24px;background:#f3f3f3;border:1px solid #aeb3b8;border-radius:4px;"></div>
<span class="t" style="top:919.0px;font-size:16.5px;left:673.2px;font-weight:700;color:#6c757d;font-family:'Liberation Serif',serif;">A</span>
<span class="t" style="top:918.8px;font-size:14px;left:691.0px;color:#6c757d;letter-spacing:0.204px;">String</span>
<div style="left:978px;top:919px;width:17px;height:17px;border-radius:3px;background:#fff;border:1px solid #6f757c"></div>
<span class="t" style="top:918.2px;font-size:14px;left:1005px;color:#495057;letter-spacing:0.315px;">Nullable</span>
<svg style="left:1071.8px;top:920.8px;" width="14" height="14" viewBox="0 0 14 14"><circle cx="7" cy="7" r="7" fill="#e58c8c"/><rect x="3.4" y="6" width="7.2" height="2" rx="0.6" fill="#fff"/></svg>
<div style="left:335.6px;top:954.8px;width:10.4px;height:10.4px;border-radius:50%;border:1px solid #dfe2e5;background:#fff"></div>
<div style="left:353px;top:948px;width:298.7px;height:24px;background:#f3f3f3;border:1px solid #aeb3b8;border-radius:4px;"></div>
<span class="t" style="top:950.8px;font-size:14px;left:362.3px;color:#6c757d;letter-spacing:0.336px;">ColumnID</span>
<div style="left:661.2px;top:948px;width:307.8px;height:24px;background:#f3f3f3;border:1px solid #aeb3b8;border-radius:4px;"></div>
<span class="t" style="top:951.0px;font-size:16.5px;left:673.2px;font-weight:700;color:#6c757d;font-family:'Liberation Serif',serif;">A</span>
<span class="t" style="top:950.8px;font-size:14px;left:691.0px;color:#6c757d;letter-spacing:0.204px;">String</span>
<div style="left:978px;top:951px;width:17px;height:17px;border-radius:3px;background:#fff;border:1px solid #6f757c"></div>
<span class="t" style="top:950.2px;font-size:14px;left:1005px;color:#495057;letter-spacing:0.315px;">Nullable</span>
<svg style="left:1071.8px;top:952.8px;" width="14" height="14" viewBox="0 0 14 14"><circle cx="7" cy="7" r="7" fill="#e58c8c"/><rect x="3.4" y="6" width="7.2" height="2" rx="0.6" fill="#fff"/></svg>
<svg style="left:335.7px;top:988.8px;" width="11.6" height="7" viewBox="0 0 12 6.6"><path d="M0.8,0.8L6,5.7L11.2,0.8" fill="none" stroke="#16191d" stroke-width="1.6" stroke-linecap="round" stroke-linejoin="round"/></svg>
<div style="left:353px;top:980px;width:298.7px;height:24px;background:#f3f3f3;border:1px solid #aeb3b8;border-radius:4px;"></div>
<span class="t" style="top:982.8px;font-size:14px;left:362.3px;color:#6c757d;letter-spacing:-0.047px;">Blocks</span>
<div style="left:661.2px;top:980px;width:307.8px;height:24px;background:#f3f3f3;border:1px solid #aeb3b8;border-radius:4px;overflow:hidden">
<span class="t" style="left:28.8px;top:1.8px;color:#6c757d;letter-spacing:0.37px">Monday Document Create Input Block v1.0.0</span></div>
<svg style="left:672.0px;top:985.8px;" width="11.4" height="13.8" viewBox="0 0 12 14"><g fill="none" stroke="#6c757d" stroke-width="1.6"><circle cx="2" cy="2.1" r="1.45"/><circle cx="10" cy="2.1" r="1.45"/><circle cx="6" cy="11.9" r="1.45"/><path d="M2,3.6V4.6C2,6.4 6,6.3 6,8.2V10.4M10,3.6V4.6C10,6.4 6,6.3 6,8.2"/></g></svg>
<div style="left:978px;top:983px;width:17px;height:17px;border-radius:3px;background:#212529"></div>
<svg style="left:981.2px;top:987.2px;" width="10.6" height="8.6" viewBox="0 0 10.6 8.6"><path d="M1.2,4.4L4,7.2L9.4,1.4" fill="none" stroke="#fff" stroke-width="1.9" stroke-linecap="round" stroke-linejoin="round"/></svg>
<span class="t" style="top:982.2px;font-size:14px;left:1005px;color:#495057;letter-spacing:0.315px;">Nullable</span>
<svg style="left:1071.8px;top:984.8px;" width="14" height="14" viewBox="0 0 14 14"><circle cx="7" cy="7" r="7" fill="#e58c8c"/><rect x="3.4" y="6" width="7.2" height="2" rx="0.6" fill="#fff"/></svg>
<div style="left:359.5px;top:1018.8px;width:10.4px;height:10.4px;border-radius:50%;border:1px solid #dfe2e5;background:#fff"></div>
<div style="left:377px;top:1012px;width:287.5px;height:24px;background:#f3f3f3;border:1px solid #aeb3b8;border-radius:4px;"></div>
<span class="t" style="top:1014.8px;font-size:14px;left:386.3px;color:#6c757d;letter-spacing:0.014px;">Type</span>
<div style="left:674px;top:1012px;width:295px;height:24px;background:#f3f3f3;border:1px solid #aeb3b8;border-radius:4px;"></div>
<span class="t" style="top:1015.0px;font-size:16.5px;left:686px;font-weight:700;color:#6c757d;font-family:'Liberation Serif',serif;">A</span>
<span class="t" style="top:1014.8px;font-size:14px;left:703.8px;color:#6c757d;letter-spacing:0.204px;">String</span>
<div style="left:978px;top:1015px;width:17px;height:17px;border-radius:3px;background:#fff;border:1px solid #6f757c"></div>
<span class="t" style="top:1014.2px;font-size:14px;left:1005px;color:#495057;letter-spacing:0.315px;">Nullable</span>
<svg style="left:1071.8px;top:1016.8px;" width="14" height="14" viewBox="0 0 14 14"><circle cx="7" cy="7" r="7" fill="#e58c8c"/><rect x="3.4" y="6" width="7.2" height="2" rx="0.6" fill="#fff"/></svg>
<div style="left:359.5px;top:1050.8px;width:10.4px;height:10.4px;border-radius:50%;border:1px solid #dfe2e5;background:#fff"></div>
<div style="left:377px;top:1044px;width:287.5px;height:24px;background:#f3f3f3;border:1px solid #aeb3b8;border-radius:4px;"></div>
<span class="t" style="top:1046.8px;font-size:14px;left:386.3px;color:#6c757d;letter-spacing:0.108px;">AfterBlockID</span>
<div style="left:674px;top:1044px;width:295px;height:24px;background:#f3f3f3;border:1px solid #aeb3b8;border-radius:4px;"></div>
<span class="t" style="top:1047.0px;font-size:16.5px;left:686px;font-weight:700;color:#6c757d;font-family:'Liberation Serif',serif;">A</span>
<span class="t" style="top:1046.8px;font-size:14px;left:703.8px;color:#6c757d;letter-spacing:0.204px;">String</span>
<div style="left:978px;top:1047px;width:17px;height:17px;border-radius:3px;background:#212529"></div>
<svg style="left:981.2px;top:1051.2px;" width="10.6" height="8.6" viewBox="0 0 10.6 8.6"><path d="M1.2,4.4L4,7.2L9.4,1.4" fill="none" stroke="#fff" stroke-width="1.9" stroke-linecap="round" stroke-linejoin="round"/></svg>
<span class="t" style="top:1046.2px;font-size:14px;left:1005px;color:#495057;letter-spacing:0.315px;">Nullable</span>
<svg style="left:1071.8px;top:1048.8px;" width="14" height="14" viewBox="0 0 14 14"><circle cx="7" cy="7" r="7" fill="#e58c8c"/><rect x="3.4" y="6" width="7.2" height="2" rx="0.6" fill="#fff"/></svg>
<div style="left:359.5px;top:1082.8px;width:10.4px;height:10.4px;border-radius:50%;border:1px solid #dfe2e5;background:#fff"></div>
<div style="left:377px;top:1076px;width:287.5px;height:24px;background:#f3f3f3;border:1px solid #aeb3b8;border-radius:4px;"></div>
<span class="t" style="top:1078.8px;font-size:14px;left:386.3px;color:#6c757d;letter-spacing:0.259px;">Content</span>
<div style="left:674px;top:1076px;width:295px;height:24px;background:#f3f3f3;border:1px solid #aeb3b8;border-radius:4px;"></div>
<svg style="left:682.6px;top:1083.2px;" width="17.8" height="11.2" viewBox="0 0 17.8 11.2"><g fill="none" stroke="#6c757d" stroke-width="1.5" stroke-linecap="round" stroke-linejoin="round"><path d="M4.2,2.3L0.9,5.6L4.2,8.9M13.6,2.3L16.9,5.6L13.6,8.9M10.6,0.8L7.2,10.4"/></g></svg>
<span class="t" style="top:1079.3px;font-size:13.3px;left:703.2px;color:#6c757d;letter-spacing:-0.29px;">JSON</span>
<div style="left:978px;top:1079px;width:17px;height:17px;border-radius:3px;background:#fff;border:1px solid #6f757c"></div>
<span class="t" style="top:1078.2px;font-size:14px;left:1005px;color:#495057;letter-spacing:0.315px;">Nullable</span>
<svg style="left:1071.8px;top:1080.8px;" width="14" height="14" viewBox="0 0 14 14"><circle cx="7" cy="7" r="7" fill="#e58c8c"/><rect x="3.4" y="6" width="7.2" height="2" rx="0.6" fill="#fff"/></svg>
</section>
<section aria-label="Configuration">
<div style="left:1117px;top:229px;width:800px;height:892px;background:#fff;border-radius:7px 0 0 7px;"></div>
<span class="t" style="top:238.3px;font-size:14px;left:1124.8px;letter-spacing:0.427px;">Configuration</span>
<svg style="left:1887.8px;top:242.4px;" width="12.8" height="12.8" viewBox="0 0 11 11"><g fill="none" stroke="#212b36" stroke-width="1.35" stroke-linecap="round" stroke-linejoin="round"><path d="M0.8,0.8L10.2,10.2M10.2,0.8L0.8,10.2"/><path d="M0.8,3.9V0.8H3.9M7.1,0.8H10.2V3.9M10.2,7.1V10.2H7.1M3.9,10.2H0.8V7.1"/></g></svg>
<div style="left:1117px;top:269px;width:800px;height:1px;background:#e4e6e9;"></div>
<div style="left:1126px;top:279px;width:779px;height:556px;border:1px solid #e3e5e8;border-radius:8px;background:#fff;overflow:hidden"><div style="left:0;top:0;width:100%;height:48px;background:#e9ebed;border-bottom:1px solid #dcdfe2"></div></div>
<span class="t" style="top:283.9px;font-size:14px;left:1134.4px;font-weight:700;color:#6c757d;letter-spacing:-0.322px;">JS MAPPING STATEMENT</span>
<svg style="left:1315.4px;top:286.6px;" width="14" height="14" viewBox="0 0 12 12"><circle cx="6" cy="6" r="6" fill="#000"/><circle cx="6" cy="3.3" r="0.95" fill="#fff"/><path d="M4.7,5.1H6.8V8.4H7.5V9.4H4.6V8.4H5.4V6.1H4.7Z" fill="#fff"/></svg>
<span class="t" style="top:306.8px;font-size:14px;left:1134.4px;font-weight:700;letter-spacing:0.298px;">Step #2</span>
<svg style="left:1192.8px;top:308.8px;" width="12" height="13.9" viewBox="0 0 12 13.9"><g fill="none" stroke="#212529" stroke-width="1.2"><rect x="0.7" y="6.2" width="10.6" height="7" rx="1.5"/><path d="M3,6.2V3.7A3,3 0 0 1 9,3.7V6.2"/></g></svg>
<svg style="left:1769.4px;top:296.7px;" width="17.8" height="14.4" viewBox="0 0 17.8 14.4"><circle cx="5.5" cy="5.3" r="5.3" fill="#212529"/><path d="M1.6,8.2Q1.3,9.9 0.1,10.7Q2.6,10.9 4.4,9.6Z" fill="#212529"/><circle cx="12.4" cy="9.1" r="5.6" fill="#e9ebed"/><circle cx="12.6" cy="9.3" r="4.8" fill="#212529"/><path d="M15.9,12Q16.4,13.5 17.7,14.1Q15.2,14.4 13.6,13.3Z" fill="#212529"/></svg>
<span class="t" style="top:294.4px;font-size:14px;left:1794.9px;">0</span>
<svg style="left:1821px;top:297.4px;" width="13" height="12.4" viewBox="0 0 13 12.4"><path d="M2.6,4.4A5.2,5.2 0 1 1 3.2,10.6" fill="none" stroke="#8a8f96" stroke-width="1.45" stroke-linecap="round"/><path d="M0.3,0.5V5.1H4.9Z" fill="#8a8f96"/></svg>
<svg style="left:1849.2px;top:297.3px;" width="13" height="12.8" viewBox="0 0 13 12.8"><g fill="none" stroke="#6aab5c" stroke-width="1.35" stroke-linecap="round" stroke-linejoin="round"><path d="M1.6,3.2L4.8,5.4L9.9,0.8"/><path d="M0.7,8.2L5.3,12L12.4,4.6"/></g></svg>
<svg style="left:1877.4px;top:297.8px;" width="13.7" height="12" viewBox="0 0 13.7 12"><g fill="#3a5bb8"><circle cx="1.3" cy="1.5" r="1.3"/><circle cx="1.3" cy="6" r="1.3"/><circle cx="1.3" cy="10.5" r="1.3"/></g><path d="M4.9,1.5H13M4.9,6H13M4.9,10.5H13" stroke="#3a5bb8" stroke-width="1.6" stroke-linecap="round"/></svg>
<span class="t" style="top:336.8px;font-size:14px;left:1134.4px;letter-spacing:-0.223px;">JS Mapping:</span>
<div style="left:1136px;top:358px;width:759px;height:398px;background:#fffffe;border:1px solid #98a0a8;border-radius:3px 3px 0 3px;"></div>
<div style="left:1878px;top:367px;width:1px;height:380px;background:#d9dbde;"></div>
<div style="left:1878px;top:367px;width:8px;height:1px;background:#e4e6e8;"></div>
<div style="left:1879px;top:470px;width:7px;height:2px;background:#424242;"></div>
<div style="left:1178px;top:511px;width:700px;height:18px;background:transparent;border:2px solid #eeeeee;border-right:none;"></div>
<div style="left:1178px;top:385px;width:1px;height:108px;background:#d3d3d3;"></div>
<div style="left:1192.5px;top:439px;width:1px;height:36px;background:#d3d3d3;"></div>
<svg style="left:1883.5px;top:744.5px;" width="9" height="9" viewBox="0 0 9 9"><path d="M8.5,1L1,8.5M8.5,5L5,8.5" stroke="#555" stroke-width="1" fill="none"/></svg>
<div class="mono" style="left:1137px;top:367px;width:741px;height:170px;font-size:12px;line-height:18px;overflow:hidden">
<span class="t" style="left:8.2px;top:0px;line-height:18px;color:#237893">1</span>
<span class="t" style="left:41.2px;top:0px;line-height:18px"><span style="color:#0000ff">return</span><span style="color:#000"> </span><span style="color:#0431fa">[</span><span style="color:#319331">{</span></span>
<span class="t" style="left:8.2px;top:18px;line-height:18px;color:#237893">2</span>
<span class="t" style="left:41.2px;top:18px;line-height:18px"><span style="color:#000">  </span><span style="color:#a31515">&quot;ItemID&quot;</span><span style="color:#000">: </span><span style="color:#a31515">&quot;0123456789&quot;</span><span style="color:#000">,</span></span>
<span class="t" style="left:8.2px;top:36px;line-height:18px;color:#237893">3</span>
<span class="t" style="left:41.2px;top:36px;line-height:18px"><span style="color:#000">  </span><span style="color:#a31515">&quot;ColumnID&quot;</span><span style="color:#000">: </span><span style="color:#a31515">&quot;column_id&quot;</span><span style="color:#000">,</span></span>
<span class="t" style="left:8.2px;top:54px;line-height:18px;color:#237893">4</span>
<span class="t" style="left:41.2px;top:54px;line-height:18px"><span style="color:#000">  </span><span style="color:#a31515">&quot;Blocks&quot;</span><span style="color:#000">: </span><span style="color:#7b3814">[</span><span style="color:#0431fa">{</span></span>
<span class="t" style="left:8.2px;top:72px;line-height:18px;color:#237893">5</span>
<span class="t" style="left:41.2px;top:72px;line-height:18px"><span style="color:#000">    </span><span style="color:#a31515">&quot;Type&quot;</span><span style="color:#000">: </span><span style="color:#a31515">&quot;normal_text&quot;</span><span style="color:#000">,</span></span>
<span class="t" style="left:8.2px;top:90px;line-height:18px;color:#237893">6</span>
<span class="t" style="left:41.2px;top:90px;line-height:18px"><span style="color:#000">    </span><span style="color:#a31515">&quot;Content&quot;</span><span style="color:#000">: </span><span style="color:#319331">{</span><span style="color:#a31515">&quot;alignment&quot;</span><span style="color:#000">:</span><span style="color:#a31515">&quot;center&quot;</span><span style="color:#000">,</span><span style="color:#a31515">&quot;direction&quot;</span><span style="color:#000">:</span><span style="color:#a31515">&quot;rtl&quot;</span><span style="color:#000">,</span><span style="color:#a31515">&quot;deltaFormat&quot;</span><span style="color:#000">:</span><span style="color:#7b3814">[</span><span style="color:#0431fa">{</span><span style="color:#a31515">&quot;insert&quot;</span><span style="color:#000">:</span><span style="color:#a31515">&quot;This text will b</span></span>
<span class="t" style="left:8.2px;top:108px;line-height:18px;color:#237893">7</span>
<span class="t" style="left:41.2px;top:108px;line-height:18px"><span style="color:#000">  </span><span style="color:#0431fa">}</span><span style="color:#7b3814">]</span></span>
<span class="t" style="left:8.2px;top:126px;line-height:18px;color:#237893">8</span>
<span class="t" style="left:41.2px;top:126px;line-height:18px"><span style="color:#319331">}</span><span style="color:#0431fa">]</span></span>
<span class="t" style="left:8.2px;top:144px;line-height:18px;color:#0b216f">9</span>
</div>
<span class="t" style="top:765.6px;font-size:14px;left:1134.6px;letter-spacing:0.34px;">Data checkpoint column:</span>
<div style="left:1135px;top:786px;width:761px;height:32px;background:#fff;border:1px solid #6b6b6b;border-radius:4px;"></div>
</section>
<nav aria-label="Sidebar toggle">
<div style="left:295px;top:32px;width:24px;height:24px;border-radius:50%;background:#fff;border:1px solid #cbced2"></div>
<svg style="left:303.7px;top:38.5px;" width="5.4" height="10" viewBox="0 0 5.4 10"><path d="M4.7,0.7L0.9,5L4.7,9.3" fill="none" stroke="#3d4450" stroke-width="1.2" stroke-linecap="round" stroke-linejoin="round"/></svg>
</nav>
</body></html>
